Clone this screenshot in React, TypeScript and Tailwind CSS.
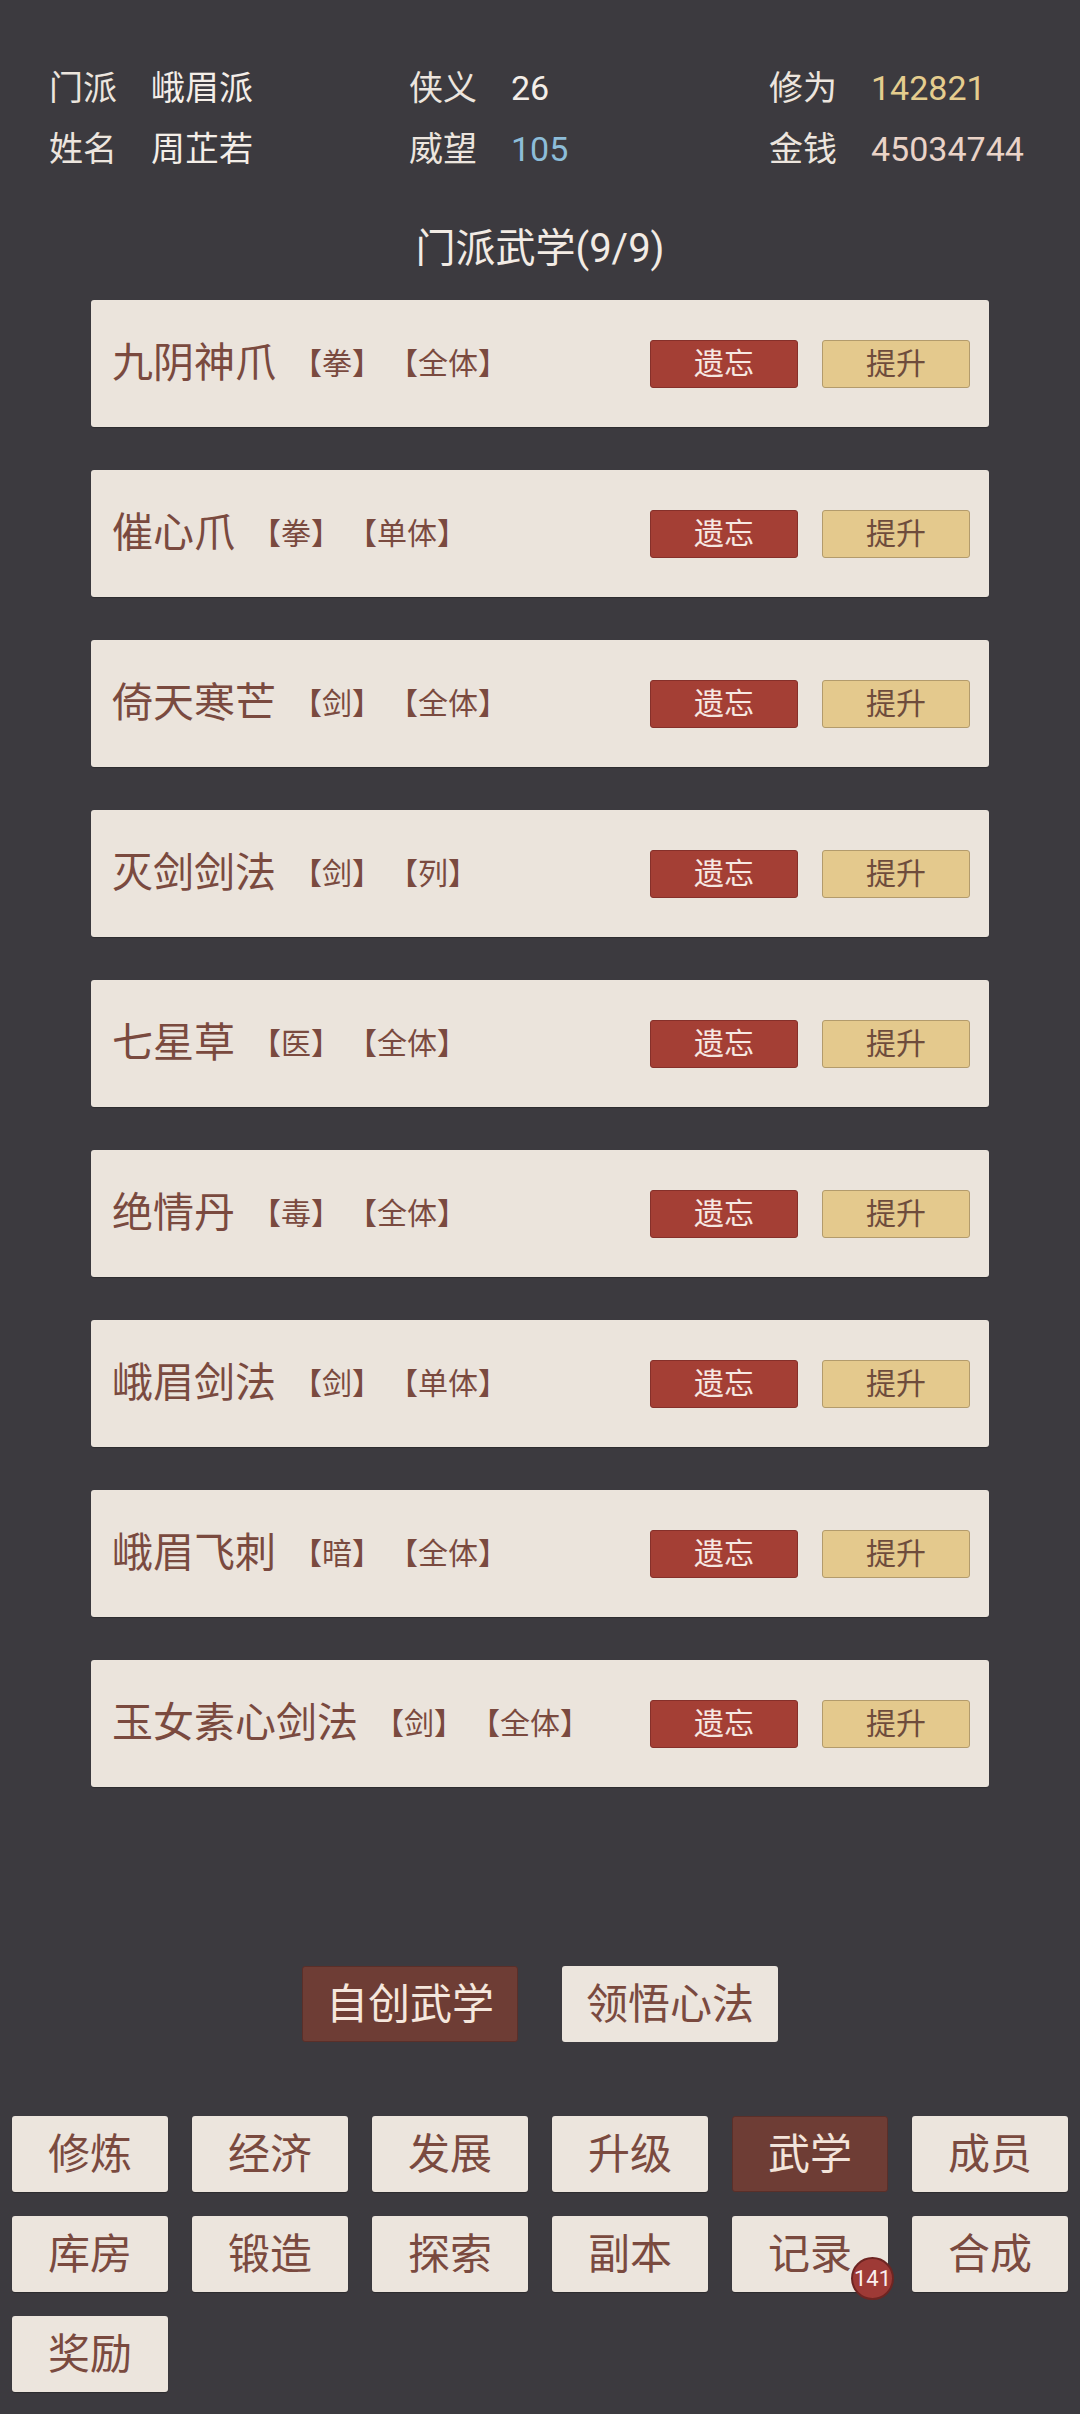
import React from 'react'

const skills = [
  { name: '九阴神爪', tags: ['拳', '全体'] },
  { name: '催心爪', tags: ['拳', '单体'] },
  { name: '倚天寒芒', tags: ['剑', '全体'] },
  { name: '灭剑剑法', tags: ['剑', '列'] },
  { name: '七星草', tags: ['医', '全体'] },
  { name: '绝情丹', tags: ['毒', '全体'] },
  { name: '峨眉剑法', tags: ['剑', '单体'] },
  { name: '峨眉飞刺', tags: ['暗', '全体'] },
  { name: '玉女素心剑法', tags: ['剑', '全体'] },
]

const navItems = ['修炼', '经济', '发展', '升级', '武学', '成员', '库房', '锻造', '探索', '副本', '记录', '合成', '奖励']

function Stat({ label, value, color }: { label: string; value: string; color: string }) {
  return (
    <div className="flex items-center gap-[34px] leading-[61px]">
      <span className="text-[#ece5de]">{label}</span>
      <span className={color}>{value}</span>
    </div>
  )
}

export default function App() {
  return (
    <div
      className="min-h-[2414px] w-[1080px] bg-[#3c3a3f] pt-[58px] [text-spacing-trim:space-all]"
      style={{ fontFamily: 'Roboto, "Noto Sans CJK SC", "Noto Sans", sans-serif' }}
    >
      {/* header stats */}
      <div className="grid grid-cols-[360px_360px_1fr] pl-[49px] text-[34px]">
        <Stat label="门派" value="峨眉派" color="text-[#f4eee8]" />
        <Stat label="侠义" value="26" color="text-[#f4eee8]" />
        <Stat label="修为" value="142821" color="text-[#e5cd8e]" />
        <Stat label="姓名" value="周芷若" color="text-[#f4eee8]" />
        <Stat label="威望" value="105" color="text-[#8dbdd9]" />
        <Stat label="金钱" value="45034744" color="text-[#ead3c7]" />
      </div>

      <h1 className="mt-[39px] mb-[21px] text-center text-[40px] leading-[60px] text-[#f2ebe4]">门派武学(9/9)</h1>

      <div className="flex flex-col gap-[43px] px-[91px]">
        {skills.map((s) => (
          <div
            key={s.name}
            className="flex h-[127px] items-center rounded-[3px] bg-[#ebe4dc] pl-[21px] pr-[19px] shadow-[0_1px_1px_rgba(0,0,0,0.25)]"
          >
            <span className="text-[41px] text-[#7a4a3f]">{s.name}</span>
            <div className="ml-[16px] flex gap-[6px] text-[30px] text-[#7a4a3f]">
              {s.tags.map((t) => (
                <span key={t}>【{t}】</span>
              ))}
            </div>
            <div className="ml-auto flex gap-[24px]">
              <button className="h-[48px] w-[148px] rounded-[3px] border border-[#86302a] bg-[#a43f35] text-[30px] text-[#f6e8e2]">
                遗忘
              </button>
              <button className="h-[48px] w-[148px] rounded-[3px] border border-[#b39b6c] bg-[#e4c98d] text-[30px] text-[#6e4c3c]">
                提升
              </button>
            </div>
          </div>
        ))}
      </div>

      <div className="mt-[179px] flex justify-center gap-[44px]">
        <button className="h-[76px] w-[216px] rounded-[3px] border border-[#5a2f29] bg-[#6e3d35] text-[42px] text-[#f5e7dd]">
          自创武学
        </button>
        <button className="h-[76px] w-[216px] rounded-[3px] bg-[#ece5dd] text-[42px] text-[#7a4a3f]">
          领悟心法
        </button>
      </div>

      <div className="mt-[74px] grid grid-cols-6 gap-[24px] px-[12px]">
        {navItems.map((n) => {
          const active = n === '武学'
          return (
            <div key={n} className="relative">
              <button
                className={
                  active
                    ? 'h-[76px] w-full rounded-[3px] border border-[#5a2f29] bg-[#6e3d35] text-[42px] text-[#f3e4da]'
                    : 'h-[76px] w-full rounded-[3px] bg-[#ece5dd] text-[42px] text-[#7a4a3f] shadow-[0_1px_1px_rgba(0,0,0,0.25)]'
                }
              >
                {n}
              </button>
              {n === '记录' && (
                <span className="absolute right-[-6px] bottom-[-8px] flex h-[43px] w-[43px] items-center justify-center rounded-full border-2 border-[#6e2522] bg-[#9e3a36] text-[22px] text-[#fbeeee]">
                  141
                </span>
              )}
            </div>
          )
        })}
      </div>
    </div>
  )
}
